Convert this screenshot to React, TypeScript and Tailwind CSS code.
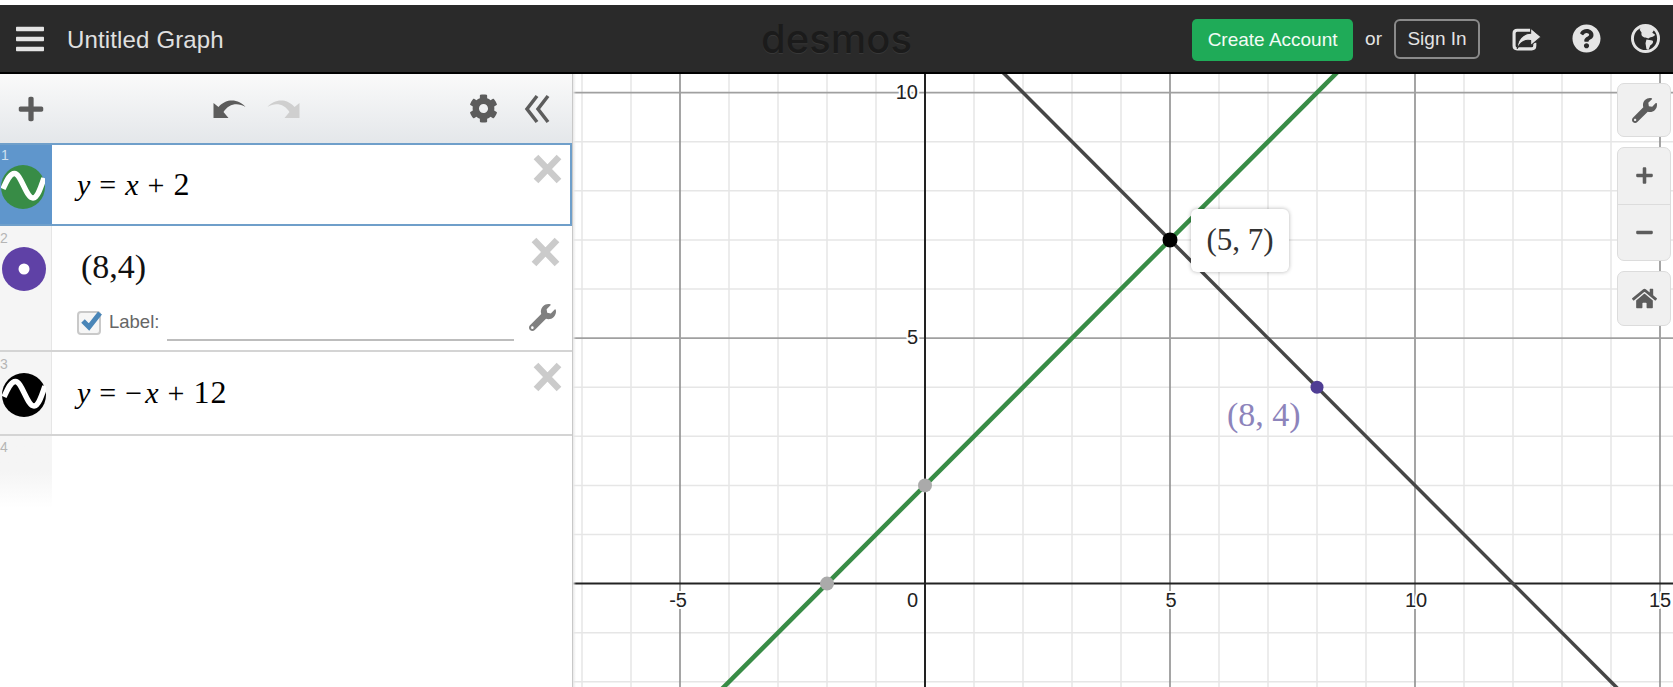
import {
  FaBars,
  FaCog,
  FaHome,
  FaMinus,
  FaPlus,
  FaQuestionCircle,
  FaWrench,
} from "react-icons/fa";

const X0 = 925;
const Y0 = 583.6;
const UNIT_X = 49;
const UNIT_Y = 49.1;

const px = (v: number) => X0 + v * UNIT_X;
const py = (v: number) => Y0 - v * UNIT_Y;

const range = (from: number, to: number) =>
  Array.from({ length: to - from + 1 }, (_, i) => from + i);

function WaveIcon({ color }: { color: string }) {
  return (
    <svg width="44" height="44" viewBox="0 0 44 44" className="block">
      <circle cx="22" cy="22" r="22" fill={color} />
      <path
        d="M2 24C6 15 9 8.5 13.5 8.5C20 8.5 25 33 32 33C36.5 33 40 22 43 13"
        fill="none"
        stroke="#fff"
        strokeWidth="5.5"
      />
    </svg>
  );
}

function CloseIcon() {
  return (
    <svg width="29" height="30" viewBox="0 0 29 30" className="block shrink-0">
      <path d="M3 3L26 27M26 3L3 27" stroke="#cbcbcb" strokeWidth="6.5" />
    </svg>
  );
}

function UndoIcon({ className }: { className?: string }) {
  return (
    <svg width="33" height="20" viewBox="0 0 32 20" className={className}>
      <path d="M0 4V19H15L10 13C15 5 24 3 32 8C26 1 14 -2 5 8Z" fill="currentColor" />
    </svg>
  );
}

function CollapseIcon() {
  return (
    <svg width="26" height="30" viewBox="0 0 26 30" className="ml-[26px] shrink-0">
      <path d="M13 2L3 15L13 28M24 2L14 15L24 28" fill="none" stroke="#5c5c5c" strokeWidth="3.5" />
    </svg>
  );
}

function ShareIcon() {
  return (
    <svg width="29" height="24" viewBox="0 0 28 23" className="ml-[32px] shrink-0">
      <path d="M18 3H5Q2 3 2 6V18Q2 21 5 21H19Q22 21 22 18V15" fill="none" stroke="#e4e4e4" strokeWidth="3" />
      <path
        d="M18 1L28 9.5L18 18V13C13 12 8 14 5 21C5 13 10 6 18 6Z"
        fill="#e4e4e4"
        stroke="#2a2a2a"
        strokeWidth="1"
      />
    </svg>
  );
}

function GlobeIcon() {
  return (
    <svg width="29" height="29" viewBox="0 0 30 30" className="ml-[30px] shrink-0">
      <circle cx="15" cy="15" r="13.5" fill="none" stroke="#e4e4e4" strokeWidth="3" />
      <path
        d="M10 3C14 1 20 2 24 6L22 9L25 11C23 14 20 13 18 15L15 14C12 14 10 11 11 9L9 6Z"
        fill="#e4e4e4"
      />
      <path d="M16 16L22 17C24 18 22 21 20 22L18 27L16 26L15 20Z" fill="#e4e4e4" />
    </svg>
  );
}

function Gutter({ n, active, children }: { n: number; active?: boolean; children?: React.ReactNode }) {
  return (
    <div
      className={
        active
          ? "w-[52px] shrink-0 bg-[#5f96cc] pl-[1px] pt-[3px]"
          : "w-[52px] shrink-0 border-r border-[#e6e6e6] bg-[#f5f5f5] pl-[3px] pt-[5px]"
      }
    >
      <div className={active ? "text-[14px] leading-[14px] text-[#cfe0f0]" : "-ml-[3px] text-[14px] leading-[14px] text-[#b5b5b5]"}>
        {n}
      </div>
      <div className="mt-[3px]">{children}</div>
    </div>
  );
}

function Eq({ children }: { children: React.ReactNode }) {
  return <div className="font-['Liberation_Serif',serif] text-[30px] leading-none text-[#000] whitespace-pre">{children}</div>;
}

function Op({ children }: { children: React.ReactNode }) {
  return <span className="mx-[9px]">{children}</span>;
}

function Num({ children }: { children: React.ReactNode }) {
  return <span className="text-[32px] tracking-[1px]">{children}</span>;
}

function Header() {
  return (
    <header className="grid h-[69px] shrink-0 grid-cols-[1fr_auto_1fr] items-center border-b-2 border-black bg-[#2a2a2a] font-['Liberation_Sans',sans-serif]">
      <div className="flex items-center pl-[15px]">
        <FaBars className="h-[32px] w-[30px] text-[#e4e4e4]" />
        <span className="ml-[22px] mt-[2px] text-[24px] tracking-[0.15px] text-[#e0e0e0]">Untitled Graph</span>
      </div>
      <div className="font-['Inter',sans-serif] text-[40px] font-medium leading-none text-[#1b1b1b] [text-shadow:0_1px_0_#383838]">
        desmos
      </div>
      <div className="flex items-center justify-end pr-[13px]">
        <button className="mt-[2px] h-[42px] w-[161px] rounded-[5px] bg-[#1fab58] pt-[2px] text-[19px] text-[#f2fbf5]">Create Account</button>
        <span className="ml-[12px] mt-[2px] text-[19px] text-[#e4e4e4]">or</span>
        <button className="ml-[12px] mt-[1px] h-[40px] w-[86px] rounded-[6px] border-2 border-[#8a8a8a] pt-[1px] text-[19px] text-[#e4e4e4]">Sign In</button>
        <ShareIcon />
        <FaQuestionCircle className="ml-[31px] h-[29px] w-[29px] text-[#e4e4e4]" />
        <GlobeIcon />
      </div>
    </header>
  );
}

function Toolbar() {
  return (
    <div className="flex h-[69px] shrink-0 items-center bg-gradient-to-b from-[#fafafa] to-[#e4e7ea] pl-[17px] pr-[22px] text-[#5c5c5c]">
      <FaPlus className="h-[28px] w-[28px]" />
      <UndoIcon className="ml-[168px] shrink-0" />
      <UndoIcon className="ml-[21px] shrink-0 -scale-x-100 text-[#cfcfcf]" />
      <FaCog className="ml-auto h-[29px] w-[29px]" />
      <CollapseIcon />
    </div>
  );
}

function Sidebar() {
  return (
    <aside className="flex w-[573px] shrink-0 flex-col border-r border-[#c8c8c8] bg-white font-['Liberation_Sans',sans-serif]">
      <Toolbar />
      <div className="flex h-[83px] shrink-0 border-2 border-l-0 border-[#6f9fca]">
        <Gutter n={1} active>
          <WaveIcon color="#388c46" />
        </Gutter>
        <div className="flex flex-1 items-center pb-[1px] pl-[25px]">
          <Eq>
            <i>y</i>
            <Op>=</Op>
            <i>x</i>
            <Op>+</Op>
            <Num>2</Num>
          </Eq>
        </div>
        <div className="mr-[8px] mt-[9px]">
          <CloseIcon />
        </div>
      </div>
      <div className="flex h-[126px] shrink-0 border-b-2 border-[#d4d4d4]">
        <Gutter n={2}>
          <svg width="44" height="44" viewBox="0 0 44 44" className="-mt-[1px] -ml-[1px] block">
            <circle cx="22" cy="22" r="22" fill="#5f41a6" />
            <circle cx="22" cy="22" r="5.5" fill="#fff" />
          </svg>
        </Gutter>
        <div className="flex flex-1 flex-col pl-[28px]">
          <div className="pl-[1px] pt-[24px] font-['Liberation_Serif',serif] text-[34px] leading-none text-[#111]">
            (8,4)
          </div>
          <div className="ml-[-3px] mt-[24px] flex items-start">
            <svg width="26" height="26" viewBox="0 0 26 26" className="mt-[1px] shrink-0">
              <rect x="1" y="3" width="22" height="22" rx="3" fill="#f6f6f6" stroke="#c9c9c9" strokeWidth="2" />
              <path d="M6 12L12 18L23 4" fill="none" stroke="#4a86b8" strokeWidth="5" />
            </svg>
            <span className="ml-[6px] text-[18.5px] text-[#666]">Label:</span>
            <div className="ml-[8px] mt-[31px] h-[2px] w-[347px] bg-[#bdbdbd]" />
          </div>
        </div>
        <div className="mr-[10px] flex flex-col items-center">
          <div className="mt-[11px]">
            <CloseIcon />
          </div>
          <FaWrench className="mr-[6px] mt-[37px] h-[27px] w-[27px] text-[#808080]" />
        </div>
      </div>
      <div className="flex h-[84px] shrink-0 border-b-2 border-[#d4d4d4]">
        <Gutter n={3}>
          <div className="-mt-[1px] -ml-[1px]">
            <WaveIcon color="#000" />
          </div>
        </Gutter>
        <div className="flex flex-1 items-center pb-[3px] pl-[25px]">
          <Eq>
            <i>y</i>
            <Op>=</Op>
            <span className="mr-[3px]">−</span>
            <i>x</i>
            <Op>+</Op>
            <Num>12</Num>
          </Eq>
        </div>
        <div className="mr-[10px] mt-[10px]">
          <CloseIcon />
        </div>
      </div>
      <div className="flex h-[72px] shrink-0">
        <div className="w-[52px] bg-gradient-to-b from-[#f5f5f5] from-50% to-white pt-[4px] text-[14px] leading-[14px] text-[#b5b5b5]">4</div>
      </div>
    </aside>
  );
}

function GraphPaper() {
  const minorX = range(-7, 15).filter((v) => v % 5 !== 0);
  const minorY = range(-2, 11).filter((v) => v % 5 !== 0);
  const majorX = [-5, 5, 10, 15];
  const majorY = [5, 10];
  const tickStyle = { paintOrder: "stroke" } as const;
  return (
    <svg width="1100" height="613" viewBox="573 74 1100 613" className="block">
      {minorX.map((v) => (
        <line key={v} x1={px(v)} x2={px(v)} y1="74" y2="687" stroke="#e6e6e6" strokeWidth="1.5" />
      ))}
      {minorY.map((v) => (
        <line key={v} x1="573" x2="1673" y1={py(v)} y2={py(v)} stroke="#e6e6e6" strokeWidth="1.5" />
      ))}
      {majorX.map((v) => (
        <line key={v} x1={px(v)} x2={px(v)} y1="74" y2="687" stroke="#8e8e8e" strokeWidth="1.6" />
      ))}
      {majorY.map((v) => (
        <line key={v} x1="573" x2="1673" y1={py(v)} y2={py(v)} stroke="#a0a0a0" strokeWidth="1.6" />
      ))}
      <line x1={X0} x2={X0} y1="74" y2="687" stroke="#222" strokeWidth="2" />
      <line x1="573" x2="1673" y1={Y0} y2={Y0} stroke="#222" strokeWidth="2" />

      <g fontFamily="'Liberation Sans', sans-serif" fontSize="20" fill="#222" stroke="#fff" strokeWidth="4" strokeLinejoin="round" style={tickStyle}>
        <text x="918" y="99" textAnchor="end">10</text>
        <text x="918" y="344" textAnchor="end">5</text>
        <text x="687" y="607" textAnchor="end">-5</text>
        <text x="918" y="607" textAnchor="end">0</text>
        <text x="1171" y="607" textAnchor="middle">5</text>
        <text x="1416" y="607" textAnchor="middle">10</text>
        <text x="1660" y="607" textAnchor="middle">15</text>
      </g>

      <line x1={px(-7)} y1={py(-5)} x2={px(13)} y2={py(15)} stroke="#388c46" strokeWidth="4.5" />
      <line x1={px(-1)} y1={py(13)} x2={px(16)} y2={py(-4)} stroke="#464646" strokeWidth="3.5" />

      <circle cx={px(0)} cy={py(2)} r="7" fill="#aaa" />
      <circle cx={px(-2)} cy={py(0)} r="7" fill="#aaa" />
      <circle cx={px(8)} cy={py(4)} r="6.5" fill="#4f3d94" />
      <circle cx={px(5)} cy={py(7)} r="7.5" fill="#000" />
    </svg>
  );
}

function Graph() {
  return (
    <main className="relative min-w-0 flex-1 overflow-hidden bg-white">
      <GraphPaper />
      <div className="pointer-events-none absolute inset-y-0 left-0 w-[3px] bg-gradient-to-r from-[#e8e8e8] to-transparent" />

      {/* point labels */}
      <div className="absolute left-[618px] top-[135px] flex h-[63px] w-[98px] items-center justify-center rounded-[6px] bg-white font-['Liberation_Serif',serif] text-[31px] text-[#333] shadow-[0_0_4px_rgba(0,0,0,0.3)]">
        (5, 7)
      </div>
      <div className="absolute left-[654px] top-[322px] font-['Liberation_Serif',serif] text-[34px] leading-[38px] text-[#8d84bb] whitespace-pre">
        (8, 4)
      </div>

      {/* map controls */}
      <div className="absolute right-[2px] top-[9px] flex w-[54px] flex-col gap-[10px] text-[#5c5c5c]">
        <div className="flex h-[54px] items-center justify-center rounded-[7px] border border-[#dcdcdc] bg-[#f0f0f0]">
          <FaWrench className="h-[25px] w-[25px]" />
        </div>
        <div className="flex h-[114px] flex-col rounded-[7px] border border-[#dcdcdc] bg-[#f0f0f0]">
          <div className="flex flex-1 items-center justify-center border-b border-[#dcdcdc]">
            <FaPlus className="h-[19px] w-[19px]" />
          </div>
          <div className="flex flex-1 items-center justify-center">
            <FaMinus className="h-[19px] w-[19px]" />
          </div>
        </div>
        <div className="flex h-[55px] items-center justify-center rounded-[7px] border border-[#dcdcdc] bg-[#f0f0f0]">
          <FaHome className="h-[25px] w-[25px]" />
        </div>
      </div>
    </main>
  );
}

export default function App() {
  return (
    <div className="flex h-[687px] w-[1673px] flex-col overflow-hidden bg-white pt-[5px]">
      <Header />
      <div className="flex min-h-0 flex-1">
        <Sidebar />
        <Graph />
      </div>
    </div>
  );
}
